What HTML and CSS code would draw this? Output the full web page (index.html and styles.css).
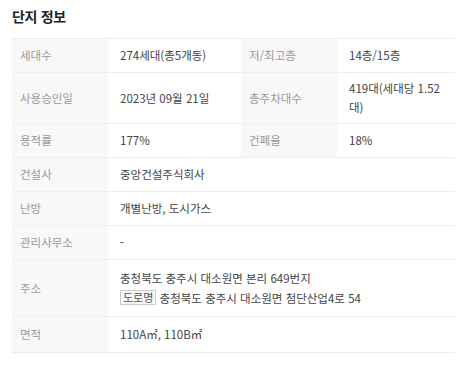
FILE: index.html
```html
<!DOCTYPE html>
<html lang="ko">
<head>
<meta charset="utf-8">
<link rel="stylesheet" href="styles.css">
</head>
<body>
<section class="info">
  <h2 class="title">단지 정보</h2>
  <table class="grid">
    <colgroup>
      <col class="c-label">
      <col class="c-val1">
      <col class="c-label">
      <col class="c-val2">
    </colgroup>
    <tbody>
      <tr>
        <th>세대수</th>
        <td>274세대(총5개동)</td>
        <th>저/최고층</th>
        <td>14층/15층</td>
      </tr>
      <tr class="tall">
        <th>사용승인일</th>
        <td>2023년 09월 21일</td>
        <th>총주차대수</th>
        <td>419대(세대당 1.52 대)</td>
      </tr>
      <tr>
        <th>용적률</th>
        <td>177%</td>
        <th>건폐율</th>
        <td>18%</td>
      </tr>
      <tr>
        <th>건설사</th>
        <td colspan="3">중앙건설주식회사</td>
      </tr>
      <tr>
        <th>난방</th>
        <td colspan="3">개별난방, 도시가스</td>
      </tr>
      <tr>
        <th>관리사무소</th>
        <td colspan="3">-</td>
      </tr>
      <tr class="addr-row">
        <th>주소</th>
        <td colspan="3">
          <div class="addr">충청북도 충주시 대소원면 본리 649번지</div>
          <div class="addr"><span class="badge">도로명</span> 충청북도 충주시 대소원면 첨단산업4로 54</div>
        </td>
      </tr>
      <tr class="last">
        <th>면적</th>
        <td colspan="3">110A㎡, 110B㎡</td>
      </tr>
    </tbody>
  </table>
</section>
</body>
</html>
```

FILE: styles.css
```css
html, body {
  margin: 0;
  padding: 0;
  background: #fff;
}
body {
  font-family: "Noto Sans CJK KR", "Noto Sans", sans-serif;
  color: #333;
}
.info {
  padding: 6px 11px 0 12px;
}
.title {
  margin: 0 0 11px;
  font-size: 14px;
  line-height: 21px;
  font-weight: 700;
  color: #222;
  letter-spacing: -0.3px;
}
.grid {
  width: 443px;
  border-collapse: collapse;
  table-layout: fixed;
  font-size: 11.5px;
  line-height: 19px;
  border-top: 1px solid #eee;
}
.c-label { width: 96px; }
.c-val1 { width: 133px; }
.c-val2 { width: 118px; }
.grid tr {
  border-bottom: 1px solid #eee;
}
.grid th,
.grid td {
  height: 34px;
  box-sizing: border-box;
  vertical-align: middle;
  text-align: left;
  font-weight: 400;
}
.grid th {
  background: #f8f8f8;
  color: #999;
  padding: 6px 8px;
}
.grid td {
  color: #444;
  padding: 6px 8px 6px 12px;
}
.grid tr.tall td,
.grid tr.tall th {
  height: 50px;
}
.grid tr.addr-row td {
  padding-top: 8px;
  padding-bottom: 8px;
}
.grid tr.last td,
.grid tr.last th {
  height: 36px;
}
.addr {
  line-height: 20px;
}
.badge {
  display: inline-block;
  border: 1px solid #ccc;
  background: #f7f7f7;
  color: #555;
  font-size: 11px;
  line-height: 13px;
  padding: 0 2px;
  vertical-align: 1px;
}
```
